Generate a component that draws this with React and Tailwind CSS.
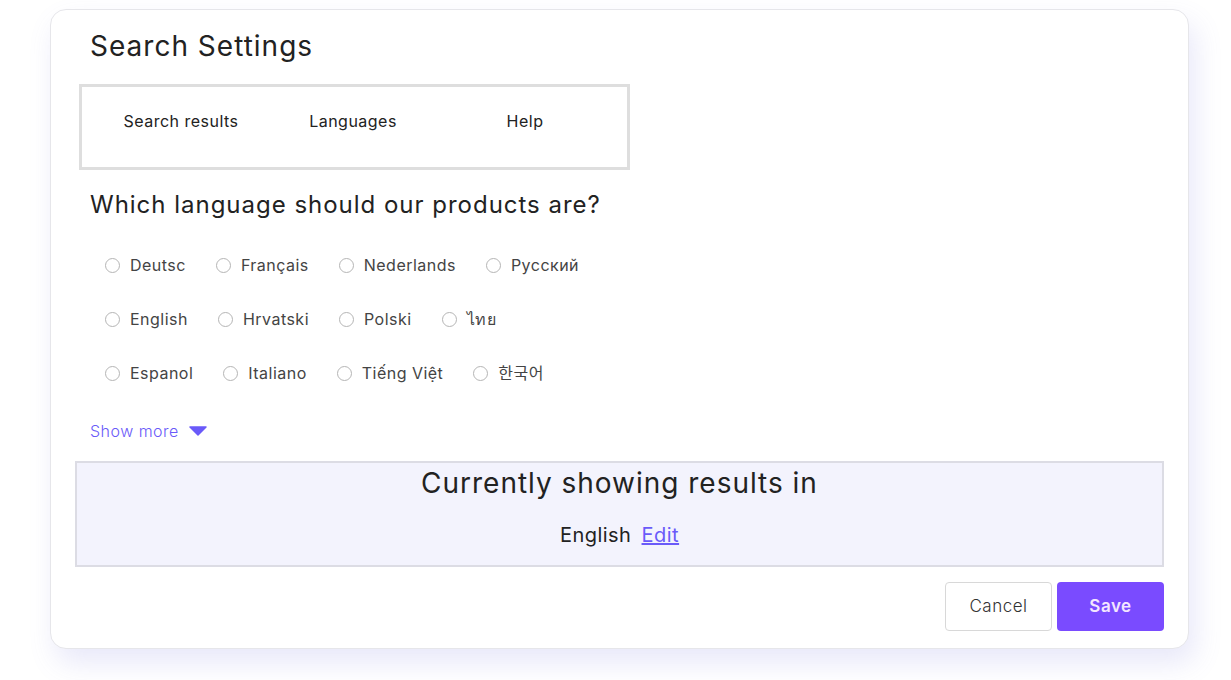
import React from 'react';

const rows = [
    ['Deutsc', 'Français', 'Nederlands', 'Русский'],
    ['English', 'Hrvatski', 'Polski', 'ไทย'],
    ['Espanol', 'Italiano', 'Tiếng Việt', '한국어'],
];

const Radio = ({ label }) => (
    <label className="flex items-center gap-[10px] cursor-pointer">
        <span className="w-[15px] h-[15px] rounded-full border border-[#b5b5b5] bg-white" />
        <span>{label}</span>
    </label>
);

const App = () => {
    return (
        <div
            className="min-h-[680px] bg-white pt-[9px] pl-[50px] text-[#222] tracking-[0.03em]"
            style={{ fontFamily: 'Inter, "Noto Sans", "Noto Sans CJK KR", sans-serif' }}
        >
            <div className="w-[1139px] rounded-[16px] border border-[#e6e6ea] bg-white px-[24px] pt-[18px] pb-[17px] shadow-[6px_14px_28px_rgba(110,110,220,0.16)]">
                <h1 className="ml-[15px] text-[28px] leading-[36px] font-normal text-[#222] tracking-[0.036em]">Search Settings</h1>

                <div className="mt-[20px] ml-[4px] w-[551px] h-[86px] border-[3px] border-[#dedede] pl-[13px] pt-[22px]">
                    <div className="flex text-[16px] leading-[24px] text-[#222]">
                        <span className="w-[172px] text-center">Search results</span>
                        <span className="w-[172px] text-center">Languages</span>
                        <span className="w-[172px] text-center">Help</span>
                    </div>
                </div>

                <h2 className="mt-[19px] ml-[15px] text-[24px] leading-[32px] font-normal text-[#222] tracking-[0.041em]">
                    Which language should our products are?
                </h2>

                <div className="mt-[32px] ml-[30px] flex flex-col gap-[30px] text-[16px] leading-[24px] text-[#444]">
                    {rows.map((row, i) => (
                        <div key={i} className="flex gap-[30px]">
                            {row.map((l) => <Radio key={l} label={l} />)}
                        </div>
                    ))}
                </div>

                <button className="mt-[34px] ml-[15px] flex items-center gap-[10px] text-[16px] leading-[24px] font-light text-[#6a5af9] tracking-[0.03em]">
                    Show more
                    <svg width="18" height="10" viewBox="0 0 18 10">
                        <path d="M1 1 L17 1 L9 9 Z" fill="#6a5af9" stroke="#6a5af9" strokeWidth="1.5" strokeLinejoin="round" />
                    </svg>
                </button>

                <div className="mt-[18px] border-2 border-[#dcdce4] bg-[#f3f3fd] pt-[2px] pb-[16px] text-center">
                    <p className="text-[28px] leading-[36px] text-[#222] tracking-[0.035em]">Currently showing results in</p>
                    <p className="mt-[20px] text-[20px] leading-[28px] text-[#222]">
                        English <a href="#" className="ml-[4px] text-[#6a5af9] underline">Edit</a>
                    </p>
                </div>

                <div className="mt-[15px] flex justify-end gap-[5px]">
                    <button className="w-[107px] h-[49px] rounded-[4px] border border-[#d8d8d8] bg-white text-[17px] font-light text-[#333] tracking-[0.03em]">
                        Cancel
                    </button>
                    <button className="w-[107px] h-[49px] rounded-[4px] bg-[#7a4bff] text-[17px] font-semibold text-[#f3e6ff] tracking-[0.03em]">
                        Save
                    </button>
                </div>
            </div>
        </div>
    );
};

export default App;
